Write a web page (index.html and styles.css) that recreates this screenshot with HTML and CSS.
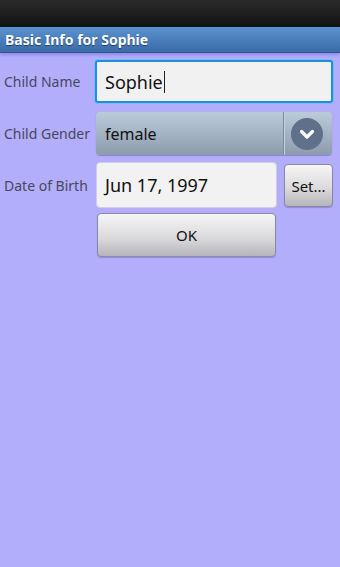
FILE: index.html
```html
<!DOCTYPE html>
<html lang="en">
<head>
  <meta charset="UTF-8" />
  <meta name="viewport" content="width=device-width, initial-scale=1.0"/>
  <title>Basic Info for Sophie</title>
  <link rel="stylesheet" href="styles.css">
</head>
<body>

<div class="status-bar"></div>
<div class="title-bar">Basic Info for Sophie</div>

<div class="form">

  <!-- Name -->
  <div class="row row-name">
    <label class="field-label" for="name">Child Name</label>
    <div class="text-input">
      <span>Sophie</span><span class="caret"></span>
    </div>
  </div>

  <!-- Gender -->
  <div class="row row-gender">
    <span class="field-label">Child Gender</span>
    <div class="spinner">
      <span class="spinner-value">female</span>
      <span class="spinner-arrow">
        <svg width="32" height="32" viewBox="0 0 32 32">
          <circle cx="16" cy="16" r="16" fill="#5f718a"/>
          <path d="M10.5 13.5 L16 19 L21.5 13.5" fill="none" stroke="#fff" stroke-width="3.2" stroke-linecap="round" stroke-linejoin="round"/>
        </svg>
      </span>
    </div>
  </div>

  <!-- Date of birth -->
  <div class="row row-date">
    <span class="field-label">Date of Birth</span>
    <div class="date-group">
      <div class="date-field">Jun 17, 1997</div>
      <button class="btn btn-set">Set...</button>
    </div>
  </div>

  <!-- OK -->
  <div class="row row-ok">
    <span class="field-label"></span>
    <button class="btn btn-ok">OK</button>
  </div>

</div>

</body>
</html>
```

FILE: styles.css
```css
body {
  margin: 0;
  width: 340px;
  height: 567px;
  overflow: hidden;
  background-color: #b3aefc;
  font-family: 'Noto Sans', 'Open Sans', sans-serif;
}

.status-bar {
  height: 27px;
  background: linear-gradient(#2a2a2a, #121212);
}

.title-bar {
  height: 25px;
  line-height: 25px;
  padding-left: 5px;
  background: linear-gradient(#5a92cf, #3b6ba8);
  border-bottom: 1px solid #2e5688;
  color: white;
  font-size: 14px;
  font-weight: bold;
  text-shadow: 0 1px 1px rgba(0,0,0,0.45);
  box-shadow: 0 2px 3px rgba(120,110,220,0.6);
}

.form {
  padding: 7px 8px 0 4px;
}

.row {
  display: grid;
  grid-template-columns: 92px 1fr;
  align-items: center;
}

.field-label {
  font-size: 14px;
  color: #474760;
}

.row-gender {
  margin-top: 9px;
}

.row-date {
  margin-top: 7px;
}

.row-ok {
  margin-top: 5px;
}

.text-input {
  height: 39px;
  margin-left: -1px;
  margin-right: -1px;
  display: flex;
  align-items: center;
  padding-left: 8px;
  background: #f1f1f1;
  border: 2px solid #1d8fe3;
  border-radius: 3px;
  box-shadow: 0 0 0 1px #7fbdf0;
  font-size: 18px;
  color: #111;
}

.caret {
  display: inline-block;
  width: 1px;
  height: 22px;
  margin-left: 1px;
  background: #222;
}

.spinner {
  height: 43px;
  display: flex;
  align-items: center;
  border-radius: 4px;
  background: linear-gradient(#bccbdb, #8d9cad);
  box-shadow: 0 1px 1px rgba(60,60,120,0.35);
}

.spinner-value {
  flex: 1;
  padding-left: 9px;
  font-size: 16px;
  color: #111;
}

.spinner-arrow {
  width: 48px;
  height: 43px;
  display: flex;
  align-items: center;
  justify-content: center;
  border-left: 1px solid #7d8a99;
  box-shadow: inset 1px 0 0 #c5d1de;
}

.spinner-arrow svg {
  margin-left: -2px;
}

.date-group {
  display: flex;
  align-items: flex-start;
  gap: 7px;
}

.date-field {
  width: 171px;
  height: 44px;
  line-height: 44px;
  padding-left: 8px;
  background: #f2f2f2;
  border: 1px solid #d0cde8;
  border-radius: 4px;
  font-size: 18px;
  color: #111;
}

.btn {
  font-family: 'Noto Sans', 'Open Sans', sans-serif;
  background: linear-gradient(#f6f6f6, #d8d8da 60%, #b5b5ba);
  border: 1px solid #8a88a8;
  border-radius: 4px;
  color: #111;
  font-size: 15px;
  padding: 0;
  box-shadow: 0 1px 1px rgba(60,60,120,0.3);
}

.btn-set {
  width: 49px;
  height: 43px;
  margin-top: 2px;
}

.btn-ok {
  width: 179px;
  height: 44px;
  margin-left: 1px;
}
```
